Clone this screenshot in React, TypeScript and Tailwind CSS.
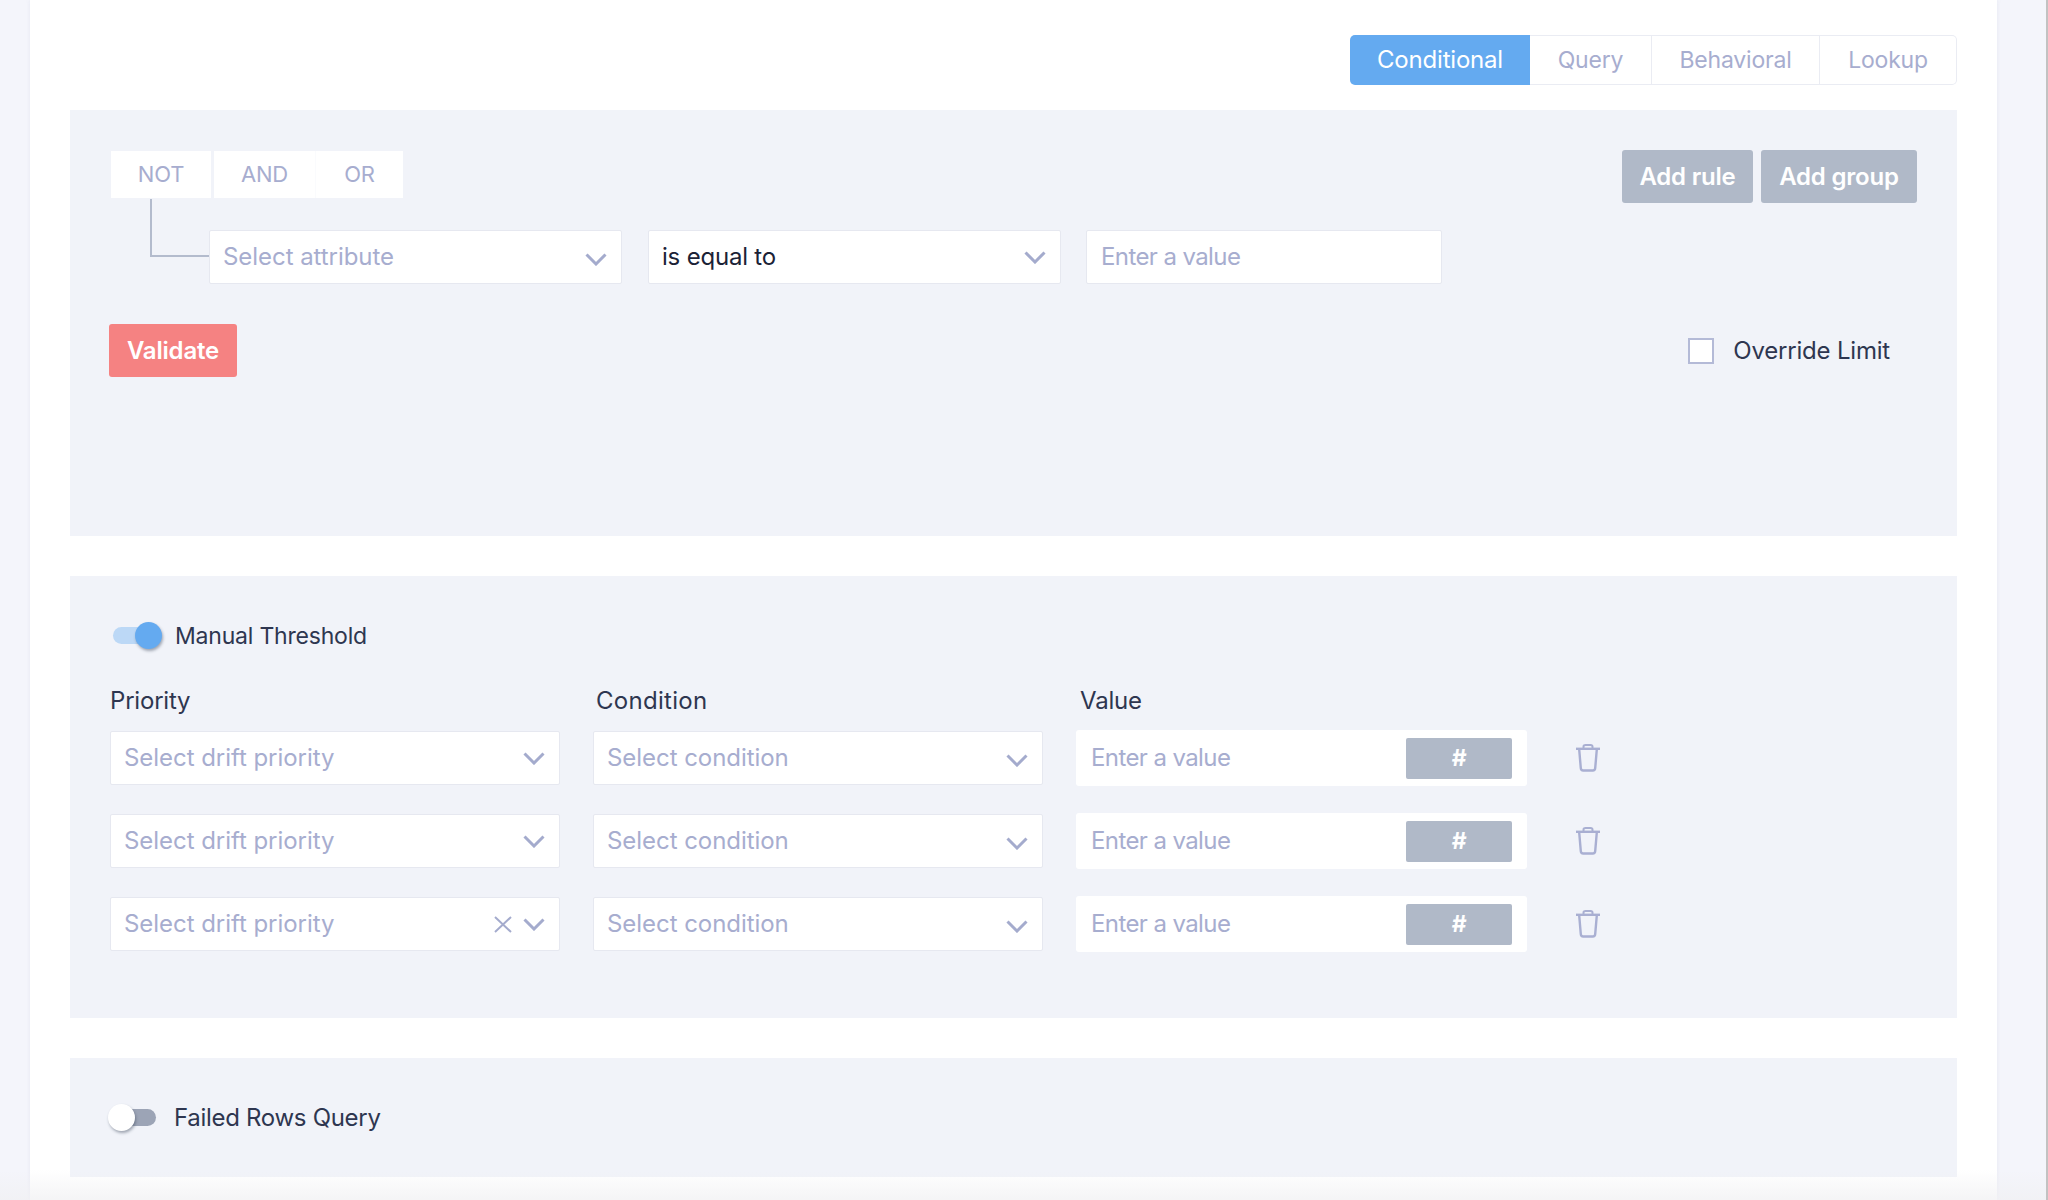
const Chevron = ({ className = "" }: { className?: string }) => (
  <svg width="22" height="13" viewBox="0 0 22 13" fill="none" className={`shrink-0 stroke-[#a4abcd] ${className}`}>
    <path d="M1.5 1.5 11 11l9.5-9.5" strokeWidth="3" />
  </svg>
);

const Trash = () => (
  <svg width="24" height="28" viewBox="0 0 24 28" fill="none" className="stroke-[#a9afd2]">
    <path d="M0 4.8h24" strokeWidth="2.4" />
    <path d="M7.5 4V2.6C7.5 1.6 8.5 1 9.5 1h5c1 0 2 .6 2 1.6V4" strokeWidth="2" />
    <path d="M3.2 5.5l1.6 18.7c.1 1.3 1 2.3 2.4 2.3h9.6c1.4 0 2.3-1 2.4-2.3l1.6-18.7" strokeWidth="2.4" />
  </svg>
);

const Select = ({ text, width, value, clear, chevronClass }: { text: string; width: string; value?: boolean; clear?: boolean; chevronClass?: string }) => (
  <div className={`flex h-[54px] shrink-0 items-center rounded-[2px] border border-[#e6e8f0] bg-white pl-[13px] pr-[14px] text-[24px] ${value ? "tracking-[-0.2px]" : "tracking-[-0.05px]"} ${width}`}>
    <span className={`flex-1 ${value ? "text-[#1b2236]" : "text-[#a7adcf]"}`}>{text}</span>
    {clear && (
      <svg width="18" height="17" viewBox="0 0 18 17" fill="none" className="mr-[11px] stroke-[#a4abcd]">
        <path d="M1 1l16 15M17 1 1 16" strokeWidth="2" />
      </svg>
    )}
    <Chevron className={chevronClass} />
  </div>
);

const ThresholdRow = ({ clear }: { clear?: boolean }) => (
  <div className="flex items-center">
    <Select text="Select drift priority" width="w-[450px]" clear={clear} />
    <div className="ml-[33px]">
      <Select text="Select condition" width="w-[450px]" chevronClass="mt-[4px]" />
    </div>
    <div className="ml-[33px] flex h-[56px] w-[451px] items-center rounded-[3px] bg-white pl-[15px] pr-[15px] text-[24px] tracking-[-0.6px] text-[#a7adcf]">
      <span className="flex-1">Enter a value</span>
      <div className="flex h-[41px] w-[106px] items-center justify-center rounded-[2px] bg-[#b0b9c8] text-[23px] font-bold text-white">#</div>
    </div>
    <div className="ml-[49px] flex">
      <Trash />
    </div>
  </div>
);

const Toggle = ({ on }: { on?: boolean }) => (
  <div className={`relative h-[27px] shrink-0 ${on ? "w-[49px]" : "w-[48px]"}`}>
    {on ? (
      <>
        <div className="absolute left-0 right-[2px] top-[5px] h-[17px] rounded-full bg-[#bcd8f6]" />
        <div className="absolute right-0 top-0 h-[27px] w-[27px] rounded-full bg-[#64aaf0] shadow-[1px_2px_3px_rgba(60,70,90,0.45)]" />
      </>
    ) : (
      <>
        <div className="absolute left-[2px] right-0 top-[5px] h-[17px] rounded-full bg-[#9ca4b6]" />
        <div className="absolute left-0 top-0 h-[27px] w-[27px] rounded-full bg-white shadow-[1px_2px_3px_rgba(60,70,90,0.45)]" />
      </>
    )}
  </div>
);

export default function App() {
  return (
    <div className="relative h-screen w-full overflow-hidden bg-[#f4f5fb] font-['Inter','Liberation_Sans',sans-serif] tracking-[-0.2px]">
      <div className="ml-[30px] h-full w-[1967px] bg-white px-[40px] pt-[35px] shadow-[0_0_4px_rgba(150,155,185,0.15)]">
        <div className="flex justify-end">
          <div className="flex h-[50px] text-[23px] text-[#a7adcf]">
            <div className="flex w-[180px] items-center justify-center rounded-l-[5px] bg-[#64aaf0] text-[24px] text-white">Conditional</div>
            <div className="flex w-[122px] items-center justify-center border-y border-r border-[#eaecf3]">Query</div>
            <div className="flex w-[168px] items-center justify-center border-y border-r border-[#eaecf3]">Behavioral</div>
            <div className="flex w-[137px] items-center justify-center rounded-r-[5px] border-y border-r border-[#eaecf3]">Lookup</div>
          </div>
        </div>

        <div className="mt-[25px] h-[426px] bg-[#f1f3f9] pl-[39px] pr-[40px] pt-[40px]">
          <div className="flex h-[80px] items-start justify-between">
            <div className="ml-[2px] mt-[1px] flex h-[47px] text-[22px] text-[#a7adcf]">
              <div className="flex w-[100px] items-center justify-center bg-white">NOT</div>
              <div className="ml-[3px] flex w-[102px] items-center justify-center border-r border-[#fafbfd] bg-white">AND</div>
              <div className="flex w-[87px] items-center justify-center bg-white">OR</div>
            </div>
            <div className="flex gap-[8px] text-[24px] font-semibold text-white">
              <div className="flex h-[53px] w-[131px] items-center justify-center rounded-[3px] bg-[#b0b9c8]">Add rule</div>
              <div className="flex h-[53px] w-[156px] items-center justify-center rounded-[3px] bg-[#b0b9c8]">Add group</div>
            </div>
          </div>

          <div className="relative ml-[100px] flex gap-[26px]">
            <div className="absolute -left-[59px] -top-[31px] h-[58px] w-[59px] border-b-2 border-l-2 border-[#b3bbcd]" />
            <Select text="Select attribute" width="w-[413px]" chevronClass="mt-[5px]" />
            <Select text="is equal to" width="w-[413px]" value chevronClass="mt-[1px]" />
            <div className="-ml-[1px] flex h-[54px] w-[356px] items-center rounded-[2px] border border-[#e6e8f0] bg-white pl-[14px] text-[24px] tracking-[-0.6px] text-[#a7adcf]">Enter a value</div>
          </div>

          <div className="mt-[40px] flex items-center justify-between pr-[27px]">
            <div className="flex h-[53px] w-[128px] items-center justify-center rounded-[3px] bg-[#f58282] text-[24px] font-semibold text-white">Validate</div>
            <div className="mt-[1px] flex items-center gap-[19px] text-[24px] text-[#2e3650]">
              <div className="h-[26px] w-[26px] border-2 border-[#b4bad7] bg-white" />
              <span>Override Limit</span>
            </div>
          </div>
        </div>

        <div className="mt-[40px] h-[442px] bg-[#f1f3f9] pl-[40px] pt-[46px]">
          <div className="flex h-[27px] items-center gap-[13px] pl-[3px] text-[23px] text-[#2e3650]">
            <Toggle on />
            <span className="mt-[1px]">Manual Threshold</span>
          </div>
          <div className="mt-[35px] flex h-[33px] items-center text-[24px] text-[#2e3650]">
            <span className="w-[486px]">Priority</span>
            <span className="w-[484px] tracking-[0.3px]">Condition</span>
            <span>Value</span>
          </div>
          <div className="mt-[13px] flex flex-col gap-[27px]">
            <ThresholdRow />
            <ThresholdRow />
            <ThresholdRow clear />
          </div>
        </div>

        <div className="mt-[40px] flex h-[119px] items-center gap-[18px] bg-[#f1f3f9] pl-[38px] text-[24px] tracking-[-0.3px] text-[#2e3650]">
          <Toggle />
          <span className="mt-[1px]">Failed Rows Query</span>
        </div>
      </div>

      {/* bottom fade and scrollbar sit over the page */}
      <div className="pointer-events-none absolute inset-x-0 bottom-0 h-[30px] bg-gradient-to-b from-transparent to-[#f0f0f2]/70" />
      <div className="absolute right-0 top-0 h-full w-[2px] bg-[#c2c2c2]" />
    </div>
  );
}
